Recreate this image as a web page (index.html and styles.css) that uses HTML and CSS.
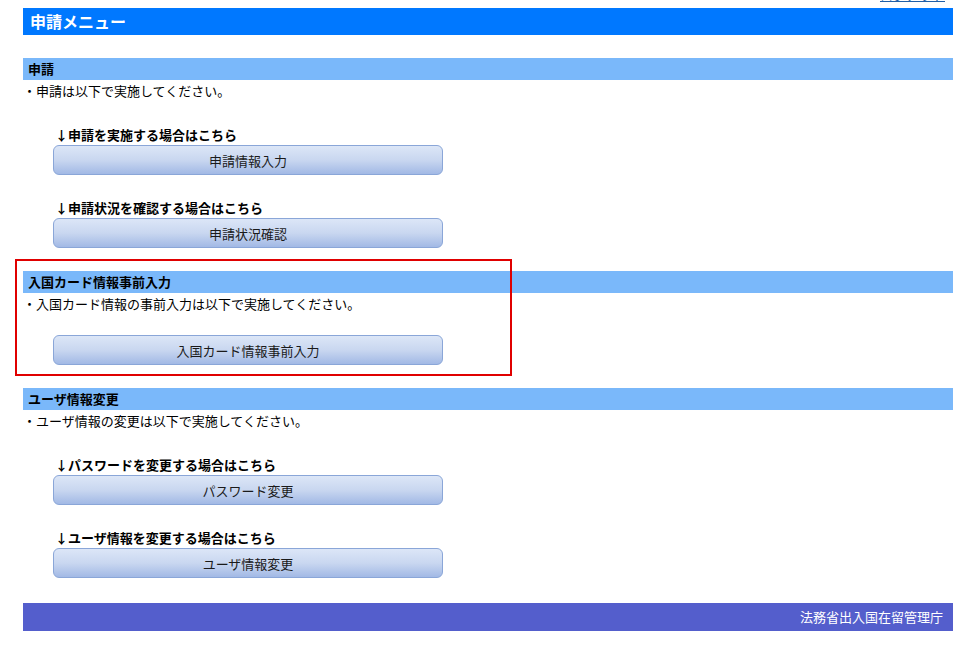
FILE: index.html
```html
<!DOCTYPE html>
<html lang="ja">
<head>
<meta charset="utf-8">
<title>申請メニュー</title>
<link rel="stylesheet" href="styles.css">
</head>
<body>
<div class="page">
  <div class="toplinks"><a href="#" class="logout">ログアウト</a></div>
  <div class="titlebar">申請メニュー</div>

  <div class="section first">
    <div class="section-head">申請</div>
    <div class="desc">・申請は以下で実施してください。</div>
    <div class="item">
      <div class="label">↓申請を実施する場合はこちら</div>
      <button class="btn">申請情報入力</button>
    </div>
    <div class="item">
      <div class="label">↓申請状況を確認する場合はこちら</div>
      <button class="btn">申請状況確認</button>
    </div>
  </div>

  <div class="section">
    <div class="section-head">入国カード情報事前入力</div>
    <div class="desc">・入国カード情報の事前入力は以下で実施してください。</div>
    <div class="item nolabel">
      <button class="btn">入国カード情報事前入力</button>
    </div>
  </div>

  <div class="section">
    <div class="section-head">ユーザ情報変更</div>
    <div class="desc">・ユーザ情報の変更は以下で実施してください。</div>
    <div class="item">
      <div class="label">↓パスワードを変更する場合はこちら</div>
      <button class="btn">パスワード変更</button>
    </div>
    <div class="item">
      <div class="label">↓ユーザ情報を変更する場合はこちら</div>
      <button class="btn">ユーザ情報変更</button>
    </div>
  </div>

  <div class="footer">法務省出入国在留管理庁</div>

  <div class="highlight"></div>
</div>
</body>
</html>
```

FILE: styles.css
```css
html, body {
  margin: 0;
  padding: 0;
  background: #ffffff;
}

body {
  font-family: "Noto Sans CJK JP", "Noto Sans", "Liberation Sans", sans-serif;
  font-size: 13px;
  color: #000000;
}

.page {
  position: relative;
  width: 930px;
  margin-left: 23px;
  padding-bottom: 14px;
}

.toplinks {
  height: 8px;
  display: flex;
  justify-content: flex-end;
  padding-right: 8px;
  overflow: hidden;
}

.logout {
  display: block;
  margin-top: -13px;
  line-height: 16px;
  font-size: 13px;
  color: #1f5fa8;
  text-decoration: underline;
}

.titlebar {
  height: 27px;
  line-height: 27px;
  background: #0078ff;
  color: #ffffff;
  font-size: 16px;
  font-weight: bold;
  padding-left: 7px;
}

.section {
  margin-top: 23px;
}

.section.first {
  margin-top: 23px;
}

.section-head {
  height: 22px;
  line-height: 22px;
  background: #7ab8fa;
  font-weight: bold;
  font-size: 13px;
  padding-left: 5px;
}

.desc {
  margin-top: 2px;
  height: 18px;
  line-height: 18px;
}

.item {
  margin-top: 23px;
}

.desc + .item {
  margin-top: 25px;
}

.desc + .item.nolabel {
  margin-top: 22px;
}

.label {
  margin-left: 32px;
  height: 19px;
  line-height: 19px;
  font-size: 13px;
  font-weight: bold;
}

.btn {
  display: block;
  margin-left: 30px;
  margin-top: 1px;
  width: 390px;
  height: 30px;
  padding: 0;
  border: 1px solid #8aa6d8;
  border-radius: 6px;
  background: linear-gradient(to bottom, #dce6f7 0%, #c9d7f0 50%, #a2b9e5 100%);
  font-family: "Noto Sans CJK JP", "Noto Sans", "Liberation Sans", sans-serif;
  font-size: 13px;
  color: #1a1a1a;
  text-align: center;
  cursor: pointer;
}

.nolabel .btn {
  margin-top: 0;
}

.footer {
  margin-top: 25px;
  height: 28px;
  line-height: 28px;
  background: #545ecc;
  color: #ffffff;
  text-align: right;
  padding-right: 10px;
  font-size: 13px;
}

.highlight {
  position: absolute;
  left: -8px;
  top: 259px;
  width: 493px;
  height: 113px;
  border: 2px solid #e00000;
  pointer-events: none;
}
```
